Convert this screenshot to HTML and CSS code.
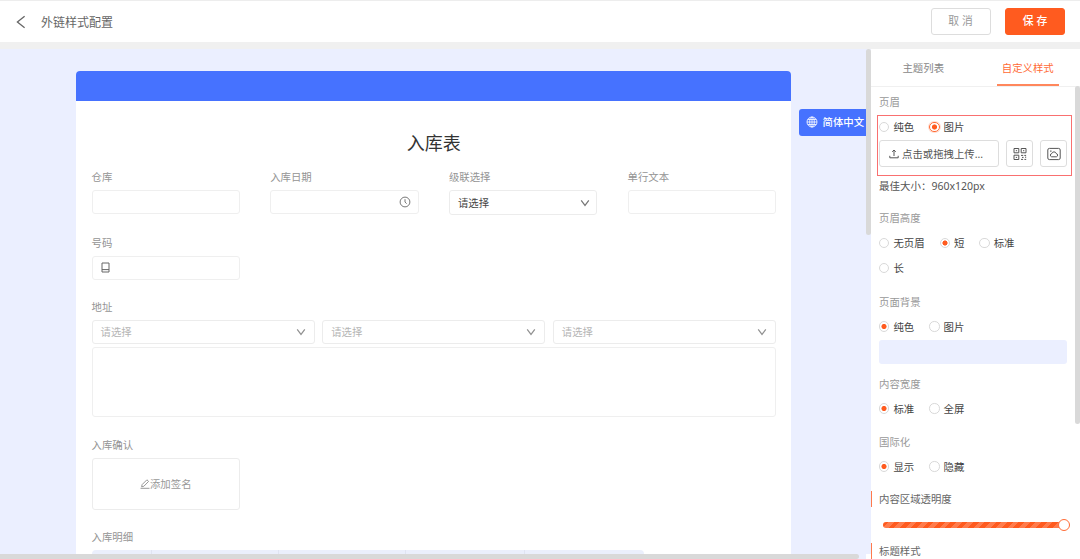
FILE: index.html
```html
<!DOCTYPE html>
<html lang="zh-CN">
<head>
<meta charset="utf-8">
<title>外链样式配置</title>
<link rel="stylesheet" href="styles.css">
</head>
<body>
<header class="topbar">
  <svg class="back" viewBox="0 0 10 14"><path d="M8.6 1.2 1.4 7l7.2 5.8"/></svg>
  <h1 class="topbar-title">外链样式配置</h1>
  <button class="btn">取 消</button>
  <button class="btn btn-primary">保 存</button>
</header>
<div class="workspace">
  <main class="preview">
    <div class="lang"><svg viewBox="0 0 12 12"><circle cx="6" cy="6" r="5"/><ellipse cx="6" cy="6" rx="2.3" ry="5"/><path d="M1 6h10M1.8 3.5h8.4M1.8 8.5h8.4M6 1v10"/></svg><span>简体中文</span></div>
    <section class="sheet">
      <div class="banner"></div>
      <div class="form">
        <h2 class="form-title">入库表</h2>
        <div class="grid row-first">
          <div class="field"><label>仓库</label><div class="input"></div></div>
          <div class="field"><label>入库日期</label><div class="input end"><svg class="clock" viewBox="0 0 12 12"><circle cx="6" cy="6" r="4.9"/><path d="M6 3.2V6l1.6 1.7"/></svg></div></div>
          <div class="field"><label>级联选择</label><div class="input select tall"><span>请选择</span><svg class="chev" viewBox="0 0 10 8"><path d="M1.2 1.4 5 6.4l3.8-5"/></svg></div></div>
          <div class="field"><label>单行文本</label><div class="input"></div></div>
        </div>
        <div class="grid row-number">
          <div class="field"><label>号码</label><div class="input"><svg class="phone" viewBox="0 0 9 11"><path d="M1 1h7v9H1zM1 7.6h7"/></svg></div></div>
        </div>
        <div class="field row-address">
          <label>地址</label>
          <div class="selects">
            <div class="input select empty"><span>请选择</span><svg class="chev" viewBox="0 0 10 8"><path d="M1.2 1.4 5 6.4l3.8-5"/></svg></div>
            <div class="input select empty"><span>请选择</span><svg class="chev" viewBox="0 0 10 8"><path d="M1.2 1.4 5 6.4l3.8-5"/></svg></div>
            <div class="input select empty"><span>请选择</span><svg class="chev" viewBox="0 0 10 8"><path d="M1.2 1.4 5 6.4l3.8-5"/></svg></div>
          </div>
          <div class="textarea"></div>
        </div>
        <div class="grid row-sign">
          <div class="field"><label>入库确认</label><div class="sign"><svg viewBox="0 0 10 10"><path d="M.5 9.3h9M1.6 7.8l.5-2.2L6.9.8l1.7 1.6-4.8 4.9z"/></svg><span>添加签名</span></div></div>
        </div>
        <div class="field row-detail"><label>入库明细</label><div class="table-head"><i></i><i></i><i></i><i></i><i></i></div></div>
      </div>
    </section>
    <div class="bar bar-v"></div>
    <div class="corner"></div>
    <div class="bar bar-h"></div>
  </main>
  <aside class="panel">
    <nav class="tabs"><a class="tab">主题列表</a><a class="tab active">自定义样式</a></nav>
    <div class="settings">
      <h3 class="label first">页眉</h3>
      <div class="callout">
        <div class="radios"><span class="radio">纯色</span><span class="radio on focus">图片</span></div>
        <div class="uploads">
          <div class="box upload"><svg viewBox="0 0 10 10"><path d="M5 7V1.2M3.2 2.8 5 1l1.8 1.8M.8 6.8v2h8.4v-2"/></svg><span>点击或拖拽上传...</span></div>
          <div class="box"><svg class="qr" viewBox="0 0 14 14"><path d="M1 1.5h4.8v4.3H1zM8.2 1.5H13v4.3H8.2zM1 8.2h4.8v4.3H1zM2.8 3.7h1.3M10 3.7h1.3M2.8 10.4h1.3M8 8.4h2.2M11.3 8.4h1.8M9 10.4h1.6M12 10.2h1.2M8 12.4h2.1M11.4 12.4h1.8"/></svg></div>
          <div class="box"><svg class="cloud" viewBox="0 0 14 14"><rect x=".8" y="1.4" width="12.4" height="11.2" rx="1.6"/><path d="M4.6 9.8a1.7 1.7 0 0 1 .2-3.3 2.3 2.3 0 0 1 4.4 0 1.7 1.7 0 0 1 .2 3.3zM3 4.1h1.6"/></svg></div>
        </div>
      </div>
      <p class="hint">最佳大小：960x120px</p>
      <h3 class="label">页眉高度</h3>
      <div class="radios wrap"><span class="radio">无页眉</span><span class="radio on">短</span><span class="radio">标准</span><span class="radio">长</span></div>
      <h3 class="label background">页面背景</h3>
      <div class="radios"><span class="radio on">纯色</span><span class="radio">图片</span></div>
      <div class="swatch"></div>
      <h3 class="label width">内容宽度</h3>
      <div class="radios"><span class="radio on">标准</span><span class="radio">全屏</span></div>
      <h3 class="label i18n">国际化</h3>
      <div class="radios"><span class="radio on">显示</span><span class="radio">隐藏</span></div>
      <h3 class="heading">内容区域透明度</h3>
      <div class="slider"><div class="knob"></div></div>
      <h3 class="heading second">标题样式</h3>
    </div>
    <div class="bar bar-panel"></div>
  </aside>
</div>
</body>
</html>
```
FILE: styles.css
```css
*, *::before { box-sizing: border-box; }
body {
  margin: 0;
  width: 1080px;
  height: 559px;
  overflow: hidden;
  display: flex;
  flex-direction: column;
  background: #f0f0f0;
  color: #444;
  font: 10.4px/16px "Noto Sans", "Noto Sans CJK SC", sans-serif;
}
h1, h2, h3, p { margin: 0; font-weight: 400; }
svg { fill: none; stroke: currentColor; stroke-width: 1; flex: none; display: block; }

.topbar {
  height: 42px;
  flex: none;
  display: flex;
  align-items: center;
  padding: 0 15px 0 16px;
  background: #fff;
  border-top: 1px solid #ededed;
}
.back { width: 10px; height: 14px; color: #666; stroke-width: 1.3; }
.topbar-title { flex: 1; margin-left: 15px; padding-top: 2px; font-size: 12px; color: #666; }
.btn {
  width: 60px;
  height: 27px;
  padding: 0 0 1px;
  margin-left: 14.5px;
  border: 1px solid #ddd;
  border-radius: 3px;
  background: #fff;
  color: #999;
  font: inherit;
  font-size: 10.8px;
}
.btn-primary { border-color: #ff5b1f; background: #ff5b1f; color: #fff; font-weight: 500; }

.workspace { flex: 1; min-height: 0; margin-top: 7px; display: flex; }
.preview { position: relative; width: 871px; padding: 22px 80px 0 76px; background: #ebefff; overflow: hidden; }
.sheet { width: 715px; height: 520px; border-radius: 4px 4px 0 0; overflow: hidden; background: #fff; }
.banner { height: 30px; background: #4672ff; }
.form { padding: 29px 15px 0 15.5px; }
.form-title { font-size: 18px; line-height: 26px; text-align: center; color: #333; }
.grid { display: grid; grid-template-columns: repeat(4, 148.5px); gap: 30.2px; }
.row-first { margin-top: 13px; height: 65.5px; }
.row-number { height: 64.5px; }
.row-address { height: 137.5px; }
.row-sign { height: 92.5px; }
.field label { display: block; height: 21px; color: #949494; }
.input {
  display: flex;
  align-items: center;
  height: 24px;
  padding: 0 8px;
  border: 1px solid #efefef;
  border-radius: 3px;
}
.input.end { justify-content: flex-end; padding-right: 7px; }
.input.tall { height: 25px; padding-right: 6.5px; }
.select { justify-content: space-between; border-color: #ececec; color: #444; }
.select.empty { flex: 1; color: #b5b5b5; }
.clock { width: 12px; height: 12px; color: #777; }
.chev { width: 10px; height: 8px; color: #777; stroke-width: 1.2; }
.empty .chev { color: #919191; }
.phone { width: 9px; height: 11px; color: #666; }
.selects { display: flex; gap: 7.5px; }
.textarea { height: 70px; margin-top: 3px; border: 1px solid #efefef; border-radius: 3px; }
.sign { height: 52px; display: flex; align-items: center; justify-content: center; border: 1px solid #ececec; border-radius: 3px; color: #999; }
.sign svg { width: 10px; height: 10px; }
.table-head { width: 552px; height: 20px; display: flex; border-radius: 4px; background: #ebeffc; }
.table-head i { flex: none; width: 119px; border-right: 1px solid #e0e4f2; }
.table-head i:first-child { width: 60px; }
.table-head i:nth-child(2) { width: 127px; }
.table-head i:nth-child(3) { width: 127px; }
.table-head i:last-child { border: 0; }

.lang {
  position: absolute;
  left: 798.5px;
  top: 60px;
  width: 72px;
  height: 27px;
  display: flex;
  align-items: center;
  padding: 0 0 1px 7px;
  gap: 5px;
  border-radius: 3px 0 0 3px;
  background: #4672ff;
  color: #fff;
  font-weight: 500;
}
.lang svg { width: 12px; height: 12px; stroke-width: .8; }
.lang span { white-space: nowrap; }
.bar { position: absolute; background: #d9d9d9; border-radius: 3px; }
.bar-v { right: 0; top: 0; width: 5px; height: 186px; }
.bar-h { left: -3px; bottom: 0; width: 862px; height: 5px; }
.corner { position: absolute; right: 0; bottom: 0; width: 5px; height: 5px; background: #fff; }

.panel { position: relative; width: 209px; background: #fff; overflow: hidden; }
.bar-panel { right: 0; top: 37px; width: 5px; height: 338px; }
.tabs { height: 38px; display: flex; padding-left: 21px; gap: 42px; border-bottom: 1px solid #f0f0f0; }
.tab { height: 37px; width: 62.5px; line-height: 38px; text-align: center; color: #888; }
.tab.active { color: #ff6a35; border-bottom: 2px solid #ff875c; }
.settings { padding: 7px 13px 0 8px; }
.label { font-size: 10.4px; color: #999; margin-top: 16px; }
.label.first { margin-top: 0; }
.label.background { margin-top: 17.5px; }
.label.width { margin-top: 12px; }
.label.i18n { margin-top: 17px; }
.callout { width: 195px; height: 61px; margin: 5px 0 0 -2px; padding: 3px 1px 0; border: 1px solid #f97070; }
.callout .radios { margin: 0; }
.radios { display: flex; gap: 9px 15px; margin-top: 9px; }
.radios.wrap { width: 170px; flex-wrap: wrap; }
.radio { display: flex; align-items: center; gap: 4px; }
.radio::before { content: ""; width: 10.4px; height: 10.4px; border: 1px solid #d9d9d9; border-radius: 50%; background: #fff; }
.radio.on::before { background: radial-gradient(circle, #ff5b1f 2.2px, transparent 2.9px); }
.radio.focus::before { border-color: #ff6b35; box-shadow: 0 0 0 1px #ffded3; }
.uploads { display: flex; gap: 7px; margin-top: 5px; }
.box { width: 27px; height: 27px; display: flex; align-items: center; justify-content: center; border: 1px solid #ddd; border-radius: 3px; color: #555; }
.box.upload { width: 120px; justify-content: flex-start; gap: 3px; padding-left: 9px; white-space: nowrap; }
.upload svg { width: 10px; height: 10px; }
.qr, .cloud { width: 14px; height: 14px; }
.hint { margin-top: 2px; color: #555; font-size: 10.5px; }
.swatch { height: 24px; margin-top: 5px; border-radius: 3px; background: #ebefff; }
.heading { height: 16px; margin: 16.5px 0 0 -8px; padding-left: 7px; border-left: 1px solid #ff7a4d; font-size: 10.4px; color: #666; }
.slider {
  width: 181px;
  height: 6px;
  margin: 14.5px 0 0 4px;
  display: flex;
  align-items: center;
  justify-content: flex-end;
  border-radius: 3px;
  background: repeating-linear-gradient(135deg, #ff5b1f 0 4px, #ff7c4c 4px 8px);
}
.knob { flex: none; width: 12px; height: 12px; margin-right: -6px; border: 1.5px solid #ff6b35; border-radius: 50%; background: #fff; }
.heading.second { margin-top: 15px; }
```
